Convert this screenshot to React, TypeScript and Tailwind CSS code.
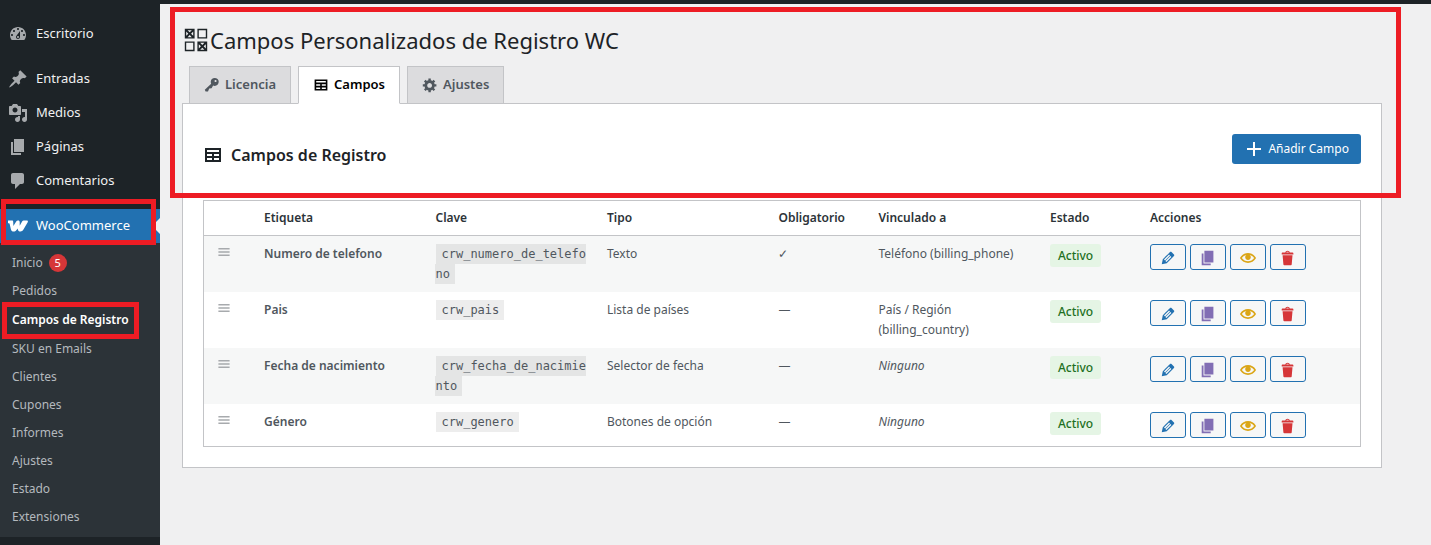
import { Fragment } from 'react'

const ICONS = {
  dashboard:
    'M3.76 16h12.48c1.1-1.37 1.76-3.11 1.76-5 0-4.42-3.58-8-8-8s-8 3.58-8 8c0 1.89.66 3.63 1.76 5zM10 4c.55 0 1 .45 1 1s-.45 1-1 1-1-.45-1-1 .45-1 1-1zM6 6c.55 0 1 .45 1 1s-.45 1-1 1-1-.45-1-1 .45-1 1-1zm8 0c.55 0 1 .45 1 1s-.45 1-1 1-1-.45-1-1 .45-1 1-1zm-5.37 5.55L12 7v6c0 1.1-.9 2-2 2s-2-.9-2-2c0-.57.24-1.08.63-1.45zM4 10c.55 0 1 .45 1 1s-.45 1-1 1-1-.45-1-1 .45-1 1-1zm12 0c.55 0 1 .45 1 1s-.45 1-1 1-1-.45-1-1 .45-1 1-1zm-5 3c0-.55-.45-1-1-1s-1 .45-1 1 .45 1 1 1 1-.45 1-1z',
  pin: 'M10.44 3.02l1.82-1.82 6.36 6.35-1.83 1.82c-1.05-.68-2.48-.57-3.41.36l-.75.75c-.92.93-1.04 2.35-.35 3.41l-1.83 1.82-2.41-2.41-2.8 2.79c-.42.42-3.38 2.71-3.8 2.29s1.86-3.39 2.28-3.81l2.79-2.79L4.1 9.36l1.83-1.82c1.05.69 2.48.57 3.4-.36l.75-.75c.93-.92 1.05-2.35.36-3.41z',
  media:
    'M13 11V4c0-.55-.45-1-1-1h-1.67L9 1H5L3.67 3H2c-.55 0-1 .45-1 1v7c0 .55.45 1 1 1h10c.55 0 1-.45 1-1zM7 4.5c1.38 0 2.5 1.12 2.5 2.5S8.38 9.5 7 9.5 4.5 8.38 4.5 7 5.62 4.5 7 4.5zM14 6h5v10.5c0 1.38-1.12 2.5-2.5 2.5S14 17.88 14 16.5s1.12-2.5 2.5-2.5c.17 0 .34.02.5.05V9h-3V6zm-4 8.05V13h2v3.5c0 1.38-1.12 2.5-2.5 2.5S7 17.88 7 16.5 8.12 14 9.5 14c.17 0 .34.02.5.05z',
  page: 'M6 15V2h10v13H6zm-1 1h8v2H3V5h2v11z',
  comments: 'M5 2h9c1.1 0 2 .9 2 2v7c0 1.1-.9 2-2 2h-2l-5 5v-5H5c-1.1 0-2-.9-2-2V4c0-1.1.9-2 2-2z',
  key: 'M16.95 2.58c1.96 1.95 1.96 5.12 0 7.07-1.51 1.51-3.75 1.84-5.59 1.01l-1.87 3.31-2.99.31L5 18H2l-1-2 7.95-7.69c-.92-1.87-.62-4.18.93-5.73 1.95-1.96 5.12-1.96 7.07 0zm-2.51 3.79c.74 0 1.33-.6 1.33-1.34 0-.73-.59-1.33-1.33-1.33-.73 0-1.33.6-1.33 1.33 0 .74.6 1.34 1.33 1.34z',
  gear: 'M18 12h-2.18c-.17.7-.44 1.35-.81 1.93l1.54 1.54-2.1 2.1-1.54-1.54c-.58.36-1.23.63-1.91.79V19H8v-2.18c-.68-.16-1.33-.43-1.91-.79l-1.54 1.54-2.12-2.12 1.54-1.54c-.36-.58-.63-1.23-.79-1.91H1V9.03h2.17c.16-.7.44-1.35.8-1.94L2.43 5.55l2.1-2.1 1.54 1.54c.58-.37 1.24-.64 1.93-.81V2h3v2.18c.68.16 1.33.43 1.91.79l1.54-1.54 2.12 2.12-1.54 1.54c.36.59.64 1.24.8 1.94H18V12zm-8.5 1.5c1.66 0 3-1.34 3-3s-1.34-3-3-3-3 1.34-3 3 1.34 3 3 3z',
  table: 'M18 17V3H2v14h16zM16 7H4V5h12v2zM9 11H4V9h5v2zm7 0h-5V9h5v2zm-7 4H4v-2h5v2zm7 0h-5v-2h5v2z',
  forms:
    'M2 2h7v7H2V2zm9 0v7h7V2h-7zM5.5 4.5L7 3H4zM12 8V3h5v5h-5zM4.5 5.5L3 4v3zM8 4L6.5 5.5 8 7V4zM5.5 6.5L4 8h3zM9 18v-7H2v7h7zm9 0h-7v-7h7v7zM8 12v5H3v-5h5zm6.5 1.5L16 12h-3zM12 16l1.5-1.5L12 13v3zm3.5-1.5L17 16v-3zm-1 1L13 17h3z',
  plus: 'M17 9v2h-6v6H9v-6H3V9h6V3h2v6h6z',
  menu: 'M17 7V5H3v2h14zm0 4V9H3v2h14zm0 4v-2H3v2h14z',
  edit: 'M13.89 3.39l2.71 2.72c.46.46.42 1.24.03 1.64l-8.01 8.02-5.56 1.16 1.16-5.58s7.6-7.63 7.99-8.03c.39-.39 1.22-.39 1.68.07zm-2.73 2.79l-5.59 5.61 1.11 1.11 5.54-5.65zm-2.97 8.23l5.58-5.6-1.07-1.08-5.59 5.6z',
  eye: 'M19.7 9.4C17.7 6 14 3.9 10 3.9S2.3 6 .3 9.4L0 10l.3.6c2 3.4 5.7 5.5 9.7 5.5s7.7-2.1 9.7-5.5l.3-.6-.3-.6zM10 14.1c-3.1 0-6-1.6-7.7-4.1C3.6 8 5.7 6.6 8 6.1c-.9.6-1.5 1.7-1.5 2.9 0 1.9 1.6 3.5 3.5 3.5s3.5-1.6 3.5-3.5c0-1.200-.6-2.300-1.500-2.900 2.300.5 4.400 1.900 5.700 3.900-1.700 2.500-4.600 4.100-7.700 4.100z',
  trash:
    'M12 4h3c.6 0 1 .4 1 1v1H3V5c0-.6.5-1 1-1h3c.2-1.1 1.3-2 2.5-2s2.3.9 2.5 2zM8 4h3c-.2-.6-.9-1-1.5-1S8.200 3.400 8 4zM4 7h11l-.9 10.100c0 .5-.5.9-1 .9H5.900c-.5 0-.9-.4-1-.9L4 7z',
}

type IconName = keyof typeof ICONS

function Icon({ name, className = 'size-5' }: { name: IconName; className?: string }) {
  return (
    <svg viewBox="0 0 20 20" fill="currentColor" aria-hidden="true" className={`shrink-0 ${className}`}>
      <path fillRule="evenodd" d={ICONS[name]} />
    </svg>
  )
}

function WooLogo() {
  return (
    <svg viewBox="0 0 20 12" fill="currentColor" aria-hidden="true" className="w-5 h-3 shrink-0">
      <path d="M0 .5h4c.8 0 1.200.4 1.200 1.200L5.400 6l2.800-4.600C8.600.8 9.200.5 10 .5c1.200 0 1.700.6 1.700 1.700v3.600l2.400-4.200C14.600.8 15.200.5 16.200.5h2.600c1 0 1.400.8.9 1.700l-4.400 7.600c-.7 1.200-1.600 1.700-2.800 1.700-1.500 0-2.500-.8-2.700-2.300l-.1-.8-1.200 1.500c-.9 1.200-1.700 1.600-2.800 1.600-1.500 0-2.500-.8-2.800-2.300L1.700 4.200C1.600 3.500 1.300 3.300.7 3.300H0z" />
    </svg>
  )
}

const menu: { icon: IconName; label: string }[] = [
  { icon: 'dashboard', label: 'Escritorio' },
  { icon: 'pin', label: 'Entradas' },
  { icon: 'media', label: 'Medios' },
  { icon: 'page', label: 'Páginas' },
  { icon: 'comments', label: 'Comentarios' },
]

const submenu = [
  'Inicio',
  'Pedidos',
  'Campos de Registro',
  'SKU en Emails',
  'Clientes',
  'Cupones',
  'Informes',
  'Ajustes',
  'Estado',
  'Extensiones',
]

const tabs: { icon: IconName; label: string; active?: boolean }[] = [
  { icon: 'key', label: 'Licencia' },
  { icon: 'table', label: 'Campos', active: true },
  { icon: 'gear', label: 'Ajustes' },
]

const fields = [
  { label: 'Numero de telefono', slug: 'crw_numero_de_telefono', type: 'Texto', required: true, linked: 'Teléfono (billing_phone)' },
  { label: 'Pais', slug: 'crw_pais', type: 'Lista de países', required: false, linked: 'País / Región (billing_country)' },
  { label: 'Fecha de nacimiento', slug: 'crw_fecha_de_nacimiento', type: 'Selector de fecha', required: false, linked: null },
  { label: 'Género', slug: 'crw_genero', type: 'Botones de opción', required: false, linked: null },
]

const actions: { icon: IconName; label: string; color: string; size: string }[] = [
  { icon: 'edit', label: 'Editar', color: 'text-[#2271b1]', size: 'size-[18px]' },
  { icon: 'page', label: 'Duplicar', color: 'text-[#826eb4]', size: 'size-[18px]' },
  { icon: 'eye', label: 'Desactivar', color: 'text-[#dba617]', size: 'size-4' },
  { icon: 'trash', label: 'Eliminar', color: 'text-[#d63638]', size: 'size-[18px]' },
]

function Highlight({ className }: { className: string }) {
  return <div className={`absolute z-10 border-5 border-[#ed1c24] pointer-events-none ${className}`} />
}

function Sidebar() {
  return (
    <nav className="w-40 shrink-0 bg-[#1d2327] pt-[13px] text-[13px]">
      <ul>
        {menu.map((item, i) => (
          <Fragment key={item.label}>
            <li>
              <a href="#" className="flex items-center gap-2 h-[34px] px-2 text-[#f0f0f1]">
                <Icon name={item.icon} className="size-5 text-[#a7aaad]" />
                {item.label}
              </a>
            </li>
            {i === 0 && <li className="h-[11px]" />}
          </Fragment>
        ))}
        <li className="h-[11px]" />
        <li>
          <a href="#" className="relative flex items-center gap-2 h-[34px] px-2 bg-[#2271b1] text-white">
            <WooLogo />
            WooCommerce
            <span className="absolute right-0 top-[9px] border-8 border-transparent border-r-[#f0f0f1]" />
            <Highlight className="left-px right-1 -top-2.5 -bottom-0.5" />
          </a>
          <ul className="bg-[#2c3338] py-1.5 text-[12px]">
            {submenu.map((item) =>
              item === 'Campos de Registro' ? (
                <li key={item}>
                  <a href="#" className="relative flex items-center h-[30px] px-3 font-semibold text-white">
                    {item}
                    <Highlight className="left-0.5 right-[21px] -top-[3px] -bottom-1" />
                  </a>
                </li>
              ) : (
                <li key={item}>
                  <a href="#" className="flex items-center gap-1.5 h-7 px-3 text-[#b4b9be]">
                    {item}
                    {item === 'Inicio' && (
                      <span className="flex items-center justify-center size-[18px] rounded-full bg-[#d63638] text-white text-[11px]">
                        5
                      </span>
                    )}
                  </a>
                </li>
              ),
            )}
          </ul>
        </li>
      </ul>
    </nav>
  )
}

function FieldsTable() {
  return (
    <table className="w-full table-fixed border-separate border-spacing-0 border border-[#c3c4c7] bg-white text-left text-[12px] text-[#50575e]">
      <colgroup>
        <col className="w-[50px]" />
        <col />
        <col />
        <col />
        <col className="w-[100px]" />
        <col />
        <col className="w-[100px]" />
        <col className="w-[220px]" />
      </colgroup>
      <thead>
        <tr className="text-[12px] text-[#2c3338]">
          {['', 'Etiqueta', 'Clave', 'Tipo', 'Obligatorio', 'Vinculado a', 'Estado', 'Acciones'].map((head) => (
            <th key={head} className="h-[35px] px-2.5 border-b border-[#c3c4c7] font-semibold">
              {head}
            </th>
          ))}
        </tr>
      </thead>
      <tbody>
        {fields.map((field) => (
          <tr key={field.slug} className="align-top odd:bg-[#f6f7f7]">
            <td className="pl-3 py-2">
              <Icon name="menu" className="size-4 text-[#a7aaad]" />
            </td>
            <td className="px-2.5 py-2 font-semibold leading-5">{field.label}</td>
            <td className="px-2.5 py-2 font-['DejaVu_Sans_Mono',monospace] leading-5 break-all">
              <code className="mx-px px-[5px] py-[3px] bg-black/7 font-['DejaVu_Sans_Mono',monospace] text-[12px]">
                {field.slug}
              </code>
            </td>
            <td className="px-2.5 py-2 leading-5">{field.type}</td>
            <td className="px-2.5 py-2 leading-5">{field.required ? '✓' : '—'}</td>
            <td className="px-2.5 py-2 leading-5">{field.linked ?? <em>Ninguno</em>}</td>
            <td className="px-2.5 py-2">
              <span className="inline-block px-2 rounded-[3px] bg-[#e5f5e5] leading-[23px] font-medium text-[#1e7022]">
                Activo
              </span>
            </td>
            <td className="px-2.5 py-2">
              <div className="flex gap-1">
                {actions.map((action) => (
                  <button
                    key={action.label}
                    type="button"
                    aria-label={action.label}
                    className={`flex items-center justify-center w-9 h-[26px] pt-0.5 rounded-[3px] border border-[#2271b1] bg-[#f6f7f7] ${action.color}`}
                  >
                    <Icon name={action.icon} className={action.size} />
                  </button>
                ))}
              </div>
            </td>
          </tr>
        ))}
      </tbody>
    </table>
  )
}

export default function App() {
  return (
    <div className="flex flex-col min-h-screen bg-[#f0f0f1] font-['Noto_Sans',sans-serif] text-[#3c434a]">
      <header className="h-1 bg-[#1d2327]" />
      <div className="flex grow">
        <Sidebar />
        <main className="relative grow min-w-0 pl-[22px] pr-[49px] pt-5">
          <Highlight className="left-2.5 right-[30px] top-[3px] h-[191px]" />
          <h1 className="flex items-center h-8 text-[22px] leading-7 text-[#1d2327]">
            <Icon name="forms" className="size-7" />
            Campos Personalizados de Registro WC
          </h1>
          <div className="flex gap-[7px] pl-[7px] pt-2.5">
            {tabs.map((tab) => (
              <button
                key={tab.label}
                type="button"
                className={
                  tab.active
                    ? 'relative flex items-center gap-[5px] h-[38px] -mb-px px-3.5 border border-b-white border-[#c3c4c7] bg-white text-[13px] font-semibold text-black'
                    : 'flex items-center gap-[5px] h-[37px] px-3.5 border border-b-0 border-[#c3c4c7] bg-[#dcdcde] text-[13px] font-semibold text-[#50575e]'
                }
              >
                <Icon name={tab.icon} className="size-4" />
                {tab.label}
              </button>
            ))}
          </div>
          <section className="border border-[#c3c4c7] bg-white px-5 pt-[30px] pb-5">
            <div className="flex items-start justify-between mb-[33px]">
              <h2 className="flex items-center gap-2 pt-[9px] text-[16px] leading-6 font-semibold text-[#1d2327]">
                <Icon name="table" />
                Campos de Registro
              </h2>
              <button type="button" className="flex items-center gap-1 h-[30px] px-3 rounded-[3px] bg-[#2271b1] text-[12px] text-white">
                <Icon name="plus" />
                Añadir Campo
              </button>
            </div>
            <FieldsTable />
          </section>
        </main>
      </div>
    </div>
  )
}
